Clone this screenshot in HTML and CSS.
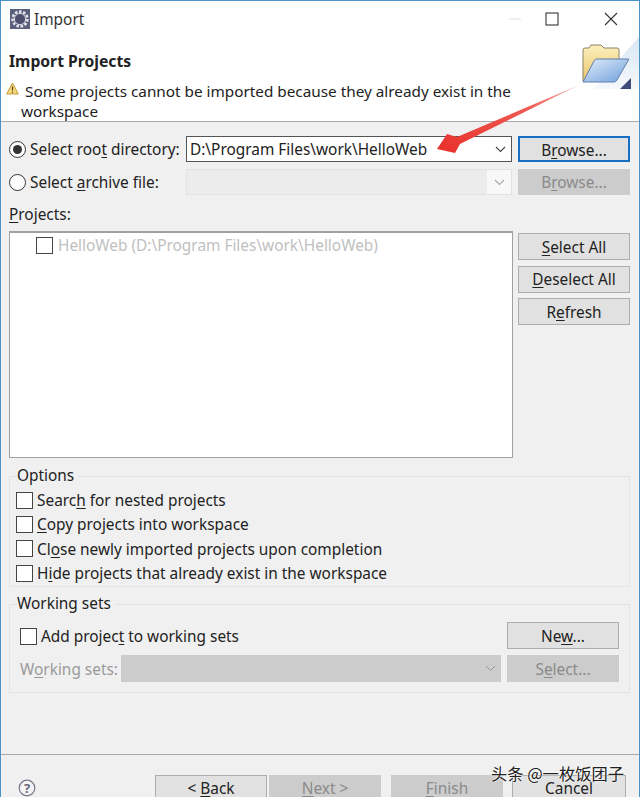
FILE: index.html

```html
<!DOCTYPE html>
<html>
<head>

    <meta charset="UTF-8">
    <title>Import</title>

    <link rel="stylesheet" href="styles.css">

</head>
<body>

    <div class="window">

        <div class="titlebar">
            <svg class="app-icon" width="20" height="20" viewBox="0 0 20 20">
                <rect width="20" height="20" fill="#5a5f7c"/>
                <circle cx="10" cy="10" r="7.4" fill="none" stroke="#e4e4ea" stroke-width="2.6" stroke-dasharray="2.6 1.6"/>
                <circle cx="10" cy="10" r="5.6" fill="#4b4f6b" stroke="#d8d8e0" stroke-width="1"/>
            </svg>
            <span class="title">Import</span>
            <div class="win-controls">
                <svg width="14" height="14" viewBox="0 0 14 14" class="win-min"><path d="M1 7h12" stroke="#ddd" stroke-width="1"/></svg>
                <svg width="14" height="14" viewBox="0 0 14 14" class="win-max"><rect x="1" y="1" width="12" height="12" fill="none" stroke="#222" stroke-width="1"/></svg>
                <svg width="14" height="14" viewBox="0 0 14 14" class="win-close"><path d="M1 1l12 12M13 1L1 13" stroke="#333" stroke-width="1.1"/></svg>
            </div>
        </div>

        <div class="banner">
            <svg class="banner-art" width="64" height="56" viewBox="0 0 64 56">
                <defs>
                    <linearGradient id="pane" x1="0" y1="0" x2="0" y2="1">
                        <stop offset="0" stop-color="#d8e6f4"/>
                        <stop offset="1" stop-color="#f6f9fc"/>
                    </linearGradient>
                    <linearGradient id="back" x1="0" y1="0" x2="0" y2="1">
                        <stop offset="0" stop-color="#fdf0bd"/>
                        <stop offset="1" stop-color="#e8c56c"/>
                    </linearGradient>
                    <linearGradient id="front" x1="0" y1="0" x2="1" y2="1">
                        <stop offset="0" stop-color="#e2eefa"/>
                        <stop offset="1" stop-color="#6f9fdc"/>
                    </linearGradient>
                </defs>
                <path d="M64 0V52H18Z" fill="url(#pane)"/>
                <path d="M8 44V13q0-2 2-2h4l2-3h10l3 3h13q2 0 2 2v9L18 44Z" fill="url(#back)" stroke="#8a8468" stroke-width="1"/>
                <path d="M8 45l11-21q1-2 3-2h32l-12 21q-1 2-3 2Z" fill="url(#front)" stroke="#5f7fa8" stroke-width="1"/>
                <path d="M56 52V41L45 52Z" fill="#3f4a78"/>
            </svg>
            <h1>Import Projects</h1>
            <p class="message">
                <svg class="warn-icon" width="13" height="13" viewBox="0 0 13 13">
                    <path d="M6.5 1L12.3 12H.7Z" fill="#f6d87e" stroke="#c49a3a" stroke-width="1"/>
                    <path d="M6.5 4.5v4M6.5 9.5v1.3" stroke="#5a4410" stroke-width="1.2"/>
                </svg>
                Some projects cannot be imported because they already exist in the workspace
            </p>
        </div>

        <div class="content">

            <div class="source-row">
                <span class="radio checked"></span>
                <label class="source-label">Select roo<u>t</u> directory:</label>
                <div class="combo">
                    <span class="combo-text">D:\Program Files\work\HelloWeb</span>
                    <svg class="chevron" width="11" height="7" viewBox="0 0 11 7"><path d="M1 1l4.5 4.5L10 1" fill="none" stroke="#444" stroke-width="1.1"/></svg>
                </div>
                <button class="btn focused">B<u>r</u>owse...</button>
            </div>

            <div class="source-row">
                <span class="radio"></span>
                <label class="source-label">Select <u>a</u>rchive file:</label>
                <div class="combo off">
                    <span></span>
                    <span class="chevron-box"><svg width="11" height="7" viewBox="0 0 11 7"><path d="M1 1l4.5 4.5L10 1" fill="none" stroke="#aaa" stroke-width="1.1"/></svg></span>
                </div>
                <button class="btn off">B<u>r</u>owse...</button>
            </div>

            <div class="projects-label"><u>P</u>rojects:</div>

            <div class="projects">
                <div class="project-list">
                    <div class="project-item">
                        <span class="check"></span>
                        <span class="item-text">HelloWeb (D:\Program Files\work\HelloWeb)</span>
                    </div>
                </div>
                <div class="project-buttons">
                    <button class="btn"><u>S</u>elect All</button>
                    <button class="btn"><u>D</u>eselect All</button>
                    <button class="btn">R<u>e</u>fresh</button>
                </div>
            </div>

            <fieldset class="group options">
                <legend>Options</legend>
                <label class="option"><span class="check"></span><span class="item-text">Searc<u>h</u> for nested projects</span></label>
                <label class="option"><span class="check"></span><span class="item-text"><u>C</u>opy projects into workspace</span></label>
                <label class="option"><span class="check"></span><span class="item-text">Cl<u>o</u>se newly imported projects upon completion</span></label>
                <label class="option"><span class="check"></span><span class="item-text">H<u>i</u>de projects that already exist in the workspace</span></label>
            </fieldset>

            <fieldset class="group sets">
                <legend>Working sets</legend>
                <div class="sets-row">
                    <label class="option"><span class="check"></span><span class="item-text">Add projec<u>t</u> to working sets</span></label>
                    <button class="btn new">Ne<u>w</u>...</button>
                </div>
                <div class="sets-row second">
                    <span class="sets-label">W<u>o</u>rking sets:</span>
                    <div class="combo dark">
                        <span></span>
                        <svg class="chevron" width="11" height="7" viewBox="0 0 11 7"><path d="M1 1l4.5 4.5L10 1" fill="none" stroke="#999" stroke-width="1"/></svg>
                    </div>
                    <button class="btn off">S<u>e</u>lect...</button>
                </div>
            </fieldset>

        </div>

        <div class="footer">
            <svg class="help" width="18" height="18" viewBox="0 0 18 18">
                <circle cx="9" cy="9" r="7.8" fill="#f4f4f4" stroke="#77778a" stroke-width="1.2"/>
                <text x="9" y="13.5" text-anchor="middle" class="help-mark">?</text>
            </svg>
            <button class="btn">&lt; <u>B</u>ack</button>
            <button class="btn off"><u>N</u>ext &gt;</button>
            <button class="btn off finish"><u>F</u>inish</button>
            <button class="btn cancel">Cancel</button>
        </div>

        <!-- arrow and watermark were drawn on top of the screenshot -->
        <svg class="arrow" width="155" height="79" viewBox="430 80 155 79">
            <defs>
                <linearGradient id="fade" x1="1" y1="0" x2="0" y2="1">
                    <stop offset="0" stop-color="#f4c0b8"/>
                    <stop offset=".35" stop-color="#ee5a52"/>
                    <stop offset="1" stop-color="#e9302c"/>
                </linearGradient>
            </defs>
            <path d="M579 85L457 137L447 134L437 149L455 153L460 144Z" fill="url(#fade)"/>
        </svg>
        <div class="watermark">头条 @一枚饭团子</div>

    </div>

</body>
</html>
```

FILE: styles.css

```css
html,
body {
    margin: 0;
    height: 797px;
    overflow: hidden;
}

* {
    box-sizing: border-box;
}

body {
    font-family: "Noto Sans", "Noto Sans CJK SC", sans-serif;
    font-size: 15.4px;
    line-height: 22px;
    color: #222;
}

.window {
    position: relative;
    height: 797px;
    overflow: hidden;
    background: #f0f0f0;
    border: 1px solid #4a94cc;
    border-bottom: 0;
}

u {
    text-underline-offset: 2px;
}

/* title bar */

.titlebar {
    display: flex;
    align-items: center;
    height: 35px;
    background: #fff;
    padding-left: 9px;
}

.title {
    margin-left: 4px;
    padding-top: 2px;
    color: #333;
}

.win-controls {
    margin-left: auto;
    display: flex;
    align-items: center;
    margin-right: 21px;
}

.win-min {
    margin-right: 23px;
}

.win-close {
    margin-left: 45px;
}

/* banner */

.banner {
    position: relative;
    height: 86px;
    background: #fff;
    border-bottom: 1px solid #a9a9a9;
    padding: 14px 0 0 8px;
}

.banner h1 {
    margin: 0;
    font-size: 15.7px;
    line-height: 22px;
    font-weight: 700;
    color: #222;
}

.message {
    margin: 9px 100px 0 12px;
    font-size: 15.300px;
    line-height: 20px;
    text-indent: 4px;
    color: #222;
}

.warn-icon {
    position: absolute;
    left: 5px;
    top: 46px;
}

.banner-art {
    position: absolute;
    right: 0;
    top: 1px;
}

/* source rows */

.content {
    padding: 14px 9px 0 8px;
}

.source-row {
    display: flex;
    align-items: center;
    height: 26px;
    margin-bottom: 7px;
}

.radio {
    flex: none;
    width: 17px;
    height: 17px;
    border: 1px solid #333;
    border-radius: 50%;
    background: #fff;
    position: relative;
}

.radio.checked::after {
    content: "";
    position: absolute;
    left: 3px;
    top: 3px;
    width: 9px;
    height: 9px;
    border-radius: 50%;
    background: #333;
}

.source-label {
    width: 156px;
    margin-left: 4px;
    padding-top: 2px;
    white-space: nowrap;
}

.combo {
    flex: none;
    width: 326px;
    height: 26px;
    display: flex;
    align-items: center;
    justify-content: space-between;
    border: 1px solid #555;
    background: #fff;
    padding-left: 3px;
}

.combo-text,
.item-text {
    padding-top: 2px;
}

.chevron {
    margin-right: 5px;
}

.combo.off {
    border-color: #e2e2e2;
    background: #ececec;
    padding: 0;
}

.chevron-box {
    display: flex;
    align-items: center;
    justify-content: center;
    width: 24px;
    height: 24px;
    background: #f8f8f8;
}

.btn {
    flex: none;
    width: 112px;
    height: 27px;
    padding: 2px 0 0;
    font: inherit;
    color: #222;
    background: #e1e1e1;
    border: 1px solid #adadad;
}

.source-row .btn {
    margin-left: 6px;
    height: 26px;
}

.btn.focused {
    border: 2px solid #1b6fc2;
}

.btn.off {
    background: #ccc;
    border-color: #ccc;
    color: #8a8a8a;
}

/* projects */

.projects-label {
    margin-top: 9px;
    line-height: 22px;
}

.projects {
    display: flex;
    gap: 5px;
    margin-top: 5px;
}

.project-list {
    width: 504px;
    height: 227px;
    background: #fff;
    border: 1px solid #a0a0a0;
    border-top-width: 2px;
    padding-left: 26px;
}

.project-item {
    display: flex;
    align-items: center;
    gap: 5px;
    color: #c0c0c0;
    height: 22px;
    margin-top: 1px;
}

.project-buttons {
    display: flex;
    flex-direction: column;
    gap: 5.500px;
    padding-top: 2px;
}

.check {
    flex: none;
    display: inline-block;
    width: 17px;
    height: 17px;
    border: 1px solid #444;
    background: #fff;
}

/* groups */

.group {
    margin: 0;
    min-width: 0;
    padding: 0;
    border: 1px solid #e4e4e4;
}

.group legend {
    padding: 0 4px 0 0;
    line-height: 22px;
}

.options {
    margin-top: 7px;
    height: 122px;
    padding: 1px 0 0 6px;
}

.options legend {
    margin-left: 1px;
}

.option {
    display: flex;
    align-items: center;
    gap: 4px;
    height: 24.300px;
    white-space: nowrap;
}

.sets {
    margin-top: 6px;
    height: 100px;
    padding: 8px 10px 0 10px;
}

.sets legend {
    margin-left: -3px;
}

.sets-row {
    display: flex;
    align-items: center;
    justify-content: space-between;
    height: 27px;
}

.sets-row.second {
    margin-top: 5px;
    justify-content: flex-start;
}

.sets-row .new {
    margin-top: -2px;
}

.sets-label {
    flex: none;
    color: #9a9a9a;
    width: 101px;
    padding-top: 2px;
    white-space: nowrap;
}

.combo.dark {
    width: 380px;
    height: 27px;
    background: #ccc;
    border: 0;
    margin-right: 6px;
}

/* footer */

.footer {
    position: absolute;
    left: 0;
    right: 0;
    top: 753px;
    height: 44px;
    border-top: 1px solid #a9a9a9;
    display: flex;
    padding: 20px 0 0 154px;
    gap: 2px;
}

.help {
    position: absolute;
    left: 17px;
    top: 24px;
}

.help-mark {
    font-size: 13px;
    font-weight: 700;
    fill: #66667a;
}

.footer .btn {
    height: 27px;
    padding: 0;
}

.footer .finish {
    margin-left: 8px;
}

.footer .cancel {
    margin-left: 7px;
    width: 114px;
}

/* overlays */

.arrow {
    position: absolute;
    left: 429px;
    top: 79px;
}

.watermark {
    position: absolute;
    left: 490px;
    top: 761px;
    font-family: "Noto Sans CJK SC", sans-serif;
    font-size: 16.300px;
    line-height: 22px;
    color: #222;
    white-space: nowrap;
    text-shadow: 0 0 2px #fff, 0 0 2px #fff;
}
```
